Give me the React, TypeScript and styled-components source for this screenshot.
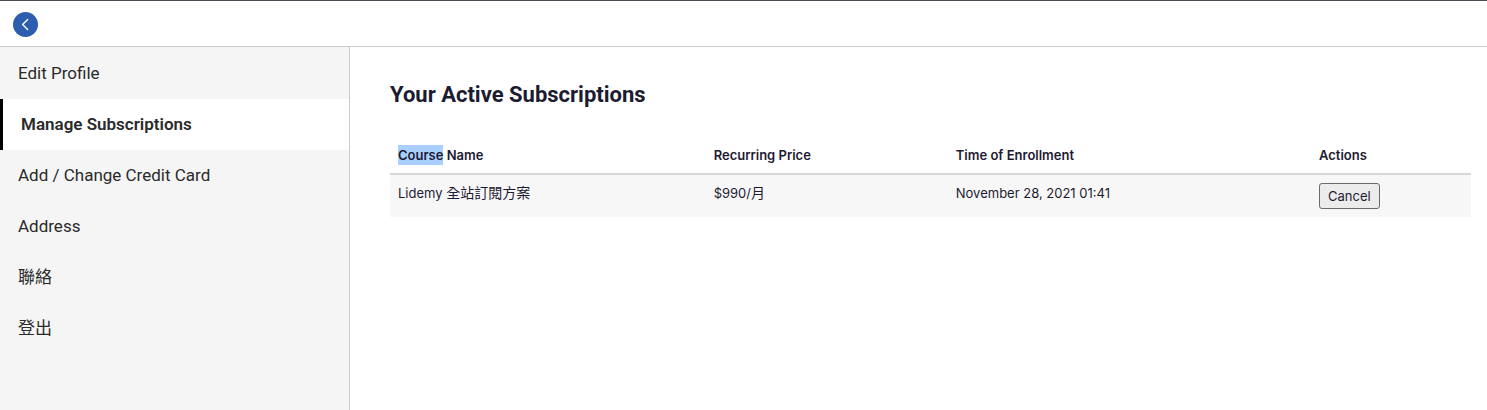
import React from "react";
import styled, { createGlobalStyle } from "styled-components";

const sans = `Roboto, "Noto Sans CJK TC", sans-serif`;
const tableSans = `Inter, "Noto Sans CJK TC", sans-serif`;

const GlobalStyle = createGlobalStyle`
  *, *::before, *::after { box-sizing: border-box; }
  body {
    margin: 0;
    background: #fff;
    color: #1d1b31;
    font: 14px/20px ${sans};
  }
`;

const Page = styled.div`
  display: flex;
  flex-direction: column;
  min-height: 100vh;
`;

const TopBar = styled.header`
  display: flex;
  align-items: center;
  padding: 11px 13px 9px;
  border-top: 1px solid #4d4d55;
  border-bottom: 1px solid #ccc;
`;

const BackButton = styled.button`
  display: flex;
  align-items: center;
  justify-content: center;
  width: 25px;
  height: 25px;
  padding: 0;
  border: 0;
  border-radius: 50%;
  background: #2d5eae;
  color: #fff;
  cursor: pointer;
`;

const Body = styled.div`
  display: flex;
  flex: 1;
`;

const Sidebar = styled.nav`
  flex: 0 0 350px;
  padding-top: 1px;
  border-right: 1px solid #ccc;
  background: #f5f5f5;
`;

const MenuLink = styled.a<{ $active?: boolean }>`
  display: block;
  padding: 13px 18px 14px;
  border-left: ${(p) => (p.$active ? "3px solid #000" : "0")};
  background: ${(p) => (p.$active ? "#fff" : "transparent")};
  color: #2a2a2a;
  font-size: 17px;
  font-weight: ${(p) => (p.$active ? 600 : 400)};
  line-height: 24px;
  text-decoration: none;
`;

const Content = styled.main`
  flex: 1;
  min-width: 0;
  padding: 32px 16px 32px 40px;
`;

const Title = styled.h1`
  margin: 0 0 26px;
  font-size: 22px;
  font-weight: 700;
  line-height: 32px;
`;

const Table = styled.table`
  width: 100%;
  border-collapse: separate;
  border-spacing: 0;
  table-layout: fixed;
  font-family: ${tableSans};
  font-size: 13px;
`;

const HeadCell = styled.th<{ $width: string }>`
  width: ${(p) => p.$width};
  padding: 8px;
  border-bottom: 2px solid #d5d7d6;
  font-weight: 600;
  text-align: left;
`;

const Cell = styled.td`
  padding: 8px;
  background: #f7f7f7;
  vertical-align: top;
`;

const Cjk = styled.span`
  font-size: 14px;
`;

const Highlight = styled.mark`
  display: inline-block;
  background: #a8cfff;
  color: inherit;
`;

const CancelButton = styled.button`
  display: block;
  height: 26px;
  padding: 0 8px;
  border: 1px solid #6b6b6b;
  border-radius: 3px;
  background: #ececec;
  color: inherit;
  font: inherit;
  cursor: pointer;
`;

const menu = ["Edit Profile", "Manage Subscriptions", "Add / Change Credit Card", "Address", "聯絡", "登出"];

export default function App() {
  return (
    <Page>
      <GlobalStyle />
      <TopBar>
        <BackButton type="button" aria-label="Back">
          <svg width="25" height="25" viewBox="0 0 25 25" fill="none" stroke="currentColor" strokeWidth="1.4" strokeLinecap="round" strokeLinejoin="round">
            <path d="M14.6 7.6 9.6 12.5l5 5" />
          </svg>
        </BackButton>
      </TopBar>
      <Body>
        <Sidebar>
          {menu.map((label) => {
            const active = label === "Manage Subscriptions";
            return (
              <MenuLink key={label} href="#" $active={active} aria-current={active ? "page" : undefined}>
                {label}
              </MenuLink>
            );
          })}
        </Sidebar>
        <Content>
          <Title>Your Active Subscriptions</Title>
          <Table>
            <thead>
              <tr>
                <HeadCell $width="29.2%"><Highlight>Course</Highlight> Name</HeadCell>
                <HeadCell $width="22.4%">Recurring Price</HeadCell>
                <HeadCell $width="33.6%">Time of Enrollment</HeadCell>
                <HeadCell $width="14.8%">Actions</HeadCell>
              </tr>
            </thead>
            <tbody>
              <tr>
                <Cell>Lidemy <Cjk>全站訂閱方案</Cjk></Cell>
                <Cell>$990/<Cjk>月</Cjk></Cell>
                <Cell>November 28, 2021 01:41</Cell>
                <Cell><CancelButton type="button">Cancel</CancelButton></Cell>
              </tr>
            </tbody>
          </Table>
        </Content>
      </Body>
    </Page>
  );
}
